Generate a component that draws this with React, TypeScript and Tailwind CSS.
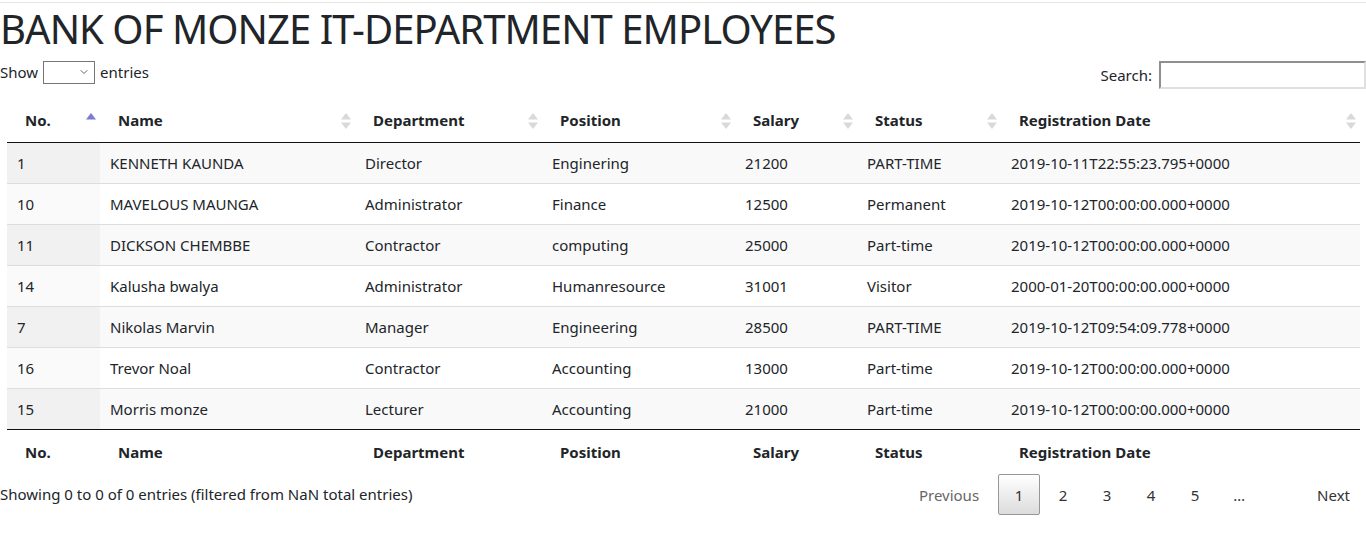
import { ChevronDown } from "lucide-react";

type Employee = {
  no: string;
  name: string;
  department: string;
  position: string;
  salary: string;
  status: string;
  registered: string;
};

const employees: Employee[] = [
  { no: "1", name: "KENNETH KAUNDA", department: "Director", position: "Enginering", salary: "21200", status: "PART-TIME", registered: "2019-10-11T22:55:23.795+0000" },
  { no: "10", name: "MAVELOUS MAUNGA", department: "Administrator", position: "Finance", salary: "12500", status: "Permanent", registered: "2019-10-12T00:00:00.000+0000" },
  { no: "11", name: "DICKSON CHEMBBE", department: "Contractor", position: "computing", salary: "25000", status: "Part-time", registered: "2019-10-12T00:00:00.000+0000" },
  { no: "14", name: "Kalusha bwalya", department: "Administrator", position: "Humanresource", salary: "31001", status: "Visitor", registered: "2000-01-20T00:00:00.000+0000" },
  { no: "7", name: "Nikolas Marvin", department: "Manager", position: "Engineering", salary: "28500", status: "PART-TIME", registered: "2019-10-12T09:54:09.778+0000" },
  { no: "16", name: "Trevor Noal", department: "Contractor", position: "Accounting", salary: "13000", status: "Part-time", registered: "2019-10-12T00:00:00.000+0000" },
  { no: "15", name: "Morris monze", department: "Lecturer", position: "Accounting", salary: "21000", status: "Part-time", registered: "2019-10-12T00:00:00.000+0000" },
];

const columns = ["No.", "Name", "Department", "Position", "Salary", "Status", "Registration Date"];
const widths = ["w-[93px]", "w-[255px]", "w-[187px]", "w-[193px]", "w-[122px]", "w-[144px]", "w-[359px]"];

// datatables-style sort arrows, only the sorted column shows the blue one
function SortIcon({ active }: { active: boolean }) {
  return (
    <svg width="10" height="16" viewBox="0 0 10 16" className="absolute right-[4px] top-[15px]">
      <path d="M5 0 L10 6.5 L0 6.5 Z" fill={active ? "#7b7bd6" : "#d9d9d9"} />
      {!active && <path d="M5 16 L10 9.5 L0 9.5 Z" fill="#d9d9d9" />}
    </svg>
  );
}

export default function App() {
  return (
    <div className="min-h-[537px] bg-white font-['Noto_Sans',sans-serif] text-[15px] text-[#212529]">
      <div className="h-[3px] border-b border-[#e5e5e5]" />

      <h1 className="mt-[2px] text-[40px] font-normal leading-[48px] tracking-[-0.95px]">
        BANK OF MONZE IT-DEPARTMENT EMPLOYEES
      </h1>

      <div className="flex items-start justify-between">
        <label className="mt-[7px] flex items-center gap-[5px] leading-[24px]">
          Show
          <span className="relative inline-block h-[23px] w-[52px]">
            <select className="h-full w-full appearance-none border border-[#767676] bg-white" />
            <ChevronDown size={12} strokeWidth={1.5} className="pointer-events-none absolute right-[5px] top-[5px] text-[#333]" />
          </span>
          entries
        </label>

        <label className="mt-[8px] flex items-center gap-[7px] leading-[24px]">
          Search:
          <input
            type="search"
            className="h-[28px] w-[207px] border-2 border-t-[#8f8f8f] border-l-[#8f8f8f] border-r-[#e0e0e0] border-b-[#e0e0e0] bg-white outline-none"
          />
        </label>
      </div>

      <table className="mx-[7px] mt-[9px] w-[1353px] table-fixed border-collapse">
        <colgroup>
          {widths.map((w) => (
            <col key={w} className={w} />
          ))}
        </colgroup>
        <thead>
          <tr className="border-b border-[#111]">
            {columns.map((c, i) => (
              <th key={c} className="relative px-[18px] py-[10px] text-left font-bold leading-[24px]">
                {c}
                <SortIcon active={i === 0} />
              </th>
            ))}
          </tr>
        </thead>
        <tbody>
          {employees.map((e, i) => {
            const odd = i % 2 === 0;
            return (
              <tr key={e.no} className={`border-t border-[#dddddd] first:border-t-0 ${odd ? "bg-[#f9f9f9]" : "bg-white"}`}>
                <td className={`px-[10px] py-[8px] leading-[24px] ${odd ? "bg-[#f1f1f1]" : "bg-[#fafafa]"}`}>{e.no}</td>
                <td className="px-[10px] py-[8px] leading-[24px]">{e.name}</td>
                <td className="px-[10px] py-[8px] leading-[24px]">{e.department}</td>
                <td className="px-[10px] py-[8px] leading-[24px]">{e.position}</td>
                <td className="px-[10px] py-[8px] leading-[24px]">{e.salary}</td>
                <td className="px-[10px] py-[8px] leading-[24px]">{e.status}</td>
                <td className="px-[10px] py-[8px] leading-[24px]">{e.registered}</td>
              </tr>
            );
          })}
        </tbody>
        <tfoot>
          <tr className="border-t border-[#111]">
            {columns.map((c) => (
              <th key={c} className="px-[18px] pb-[6px] pt-[10px] text-left font-bold leading-[24px]">
                {c}
              </th>
            ))}
          </tr>
        </tfoot>
      </table>

      <div className="flex items-start justify-between">
        <div className="pt-[12px] leading-[24px]">
          Showing 0 to 0 of 0 entries (filtered from NaN total entries)
        </div>
        <div className="mr-[6px] mt-[4px] flex items-center leading-[24px]">
          <span className="px-[17px] py-[8px] text-[#666]">Previous</span>
          <span className="ml-[2px] flex h-[41px] w-[42px] items-center justify-center rounded-[2px] border border-[#979797] bg-gradient-to-b from-white to-[#dcdcdc] text-[#333]">
            1
          </span>
          {["2", "3", "4", "5"].map((n) => (
            <span key={n} className="ml-[2px] w-[42px] py-[8px] text-center text-[#333]">
              {n}
            </span>
          ))}
          <span className="w-[46px] text-center text-[#333]">…</span>
          <span className="ml-[45px] px-[10px] py-[8px] text-[#333]">Next</span>
        </div>
      </div>
    </div>
  );
}
